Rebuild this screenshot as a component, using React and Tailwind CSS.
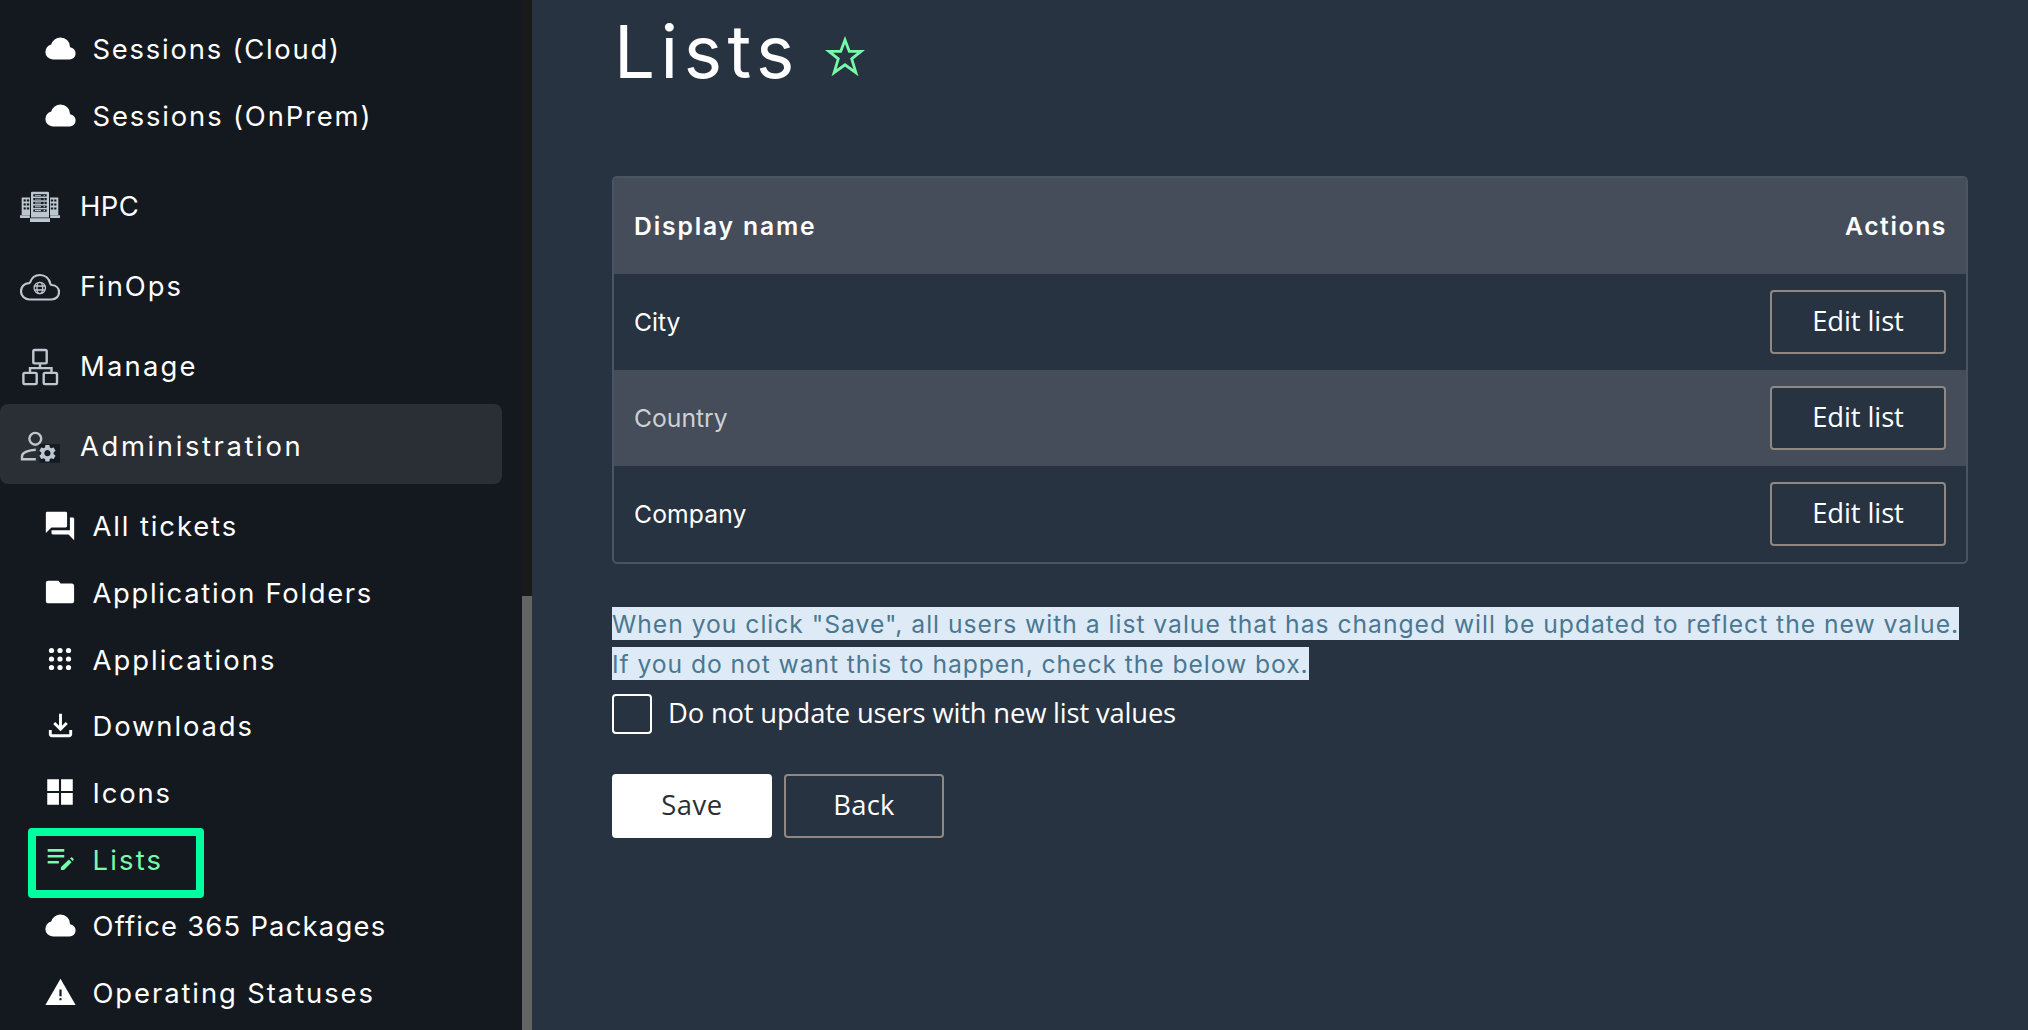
import React from "react";

const CloudIcon = () => (
  <svg viewBox="0 0 24 24" fill="currentColor" className="size-[33px]">
    <path d="M6.5 20q-2.28 0-3.89-1.57Q1 16.85 1 14.58q0-1.95 1.17-3.48q1.18-1.53 3.08-1.95q.63-2.3 2.5-3.72Q9.63 4 12 4q2.93 0 4.96 2.04Q19 8.07 19 11q1.73.2 2.86 1.5q1.14 1.28 1.14 3q0 1.88-1.31 3.19T18.5 20Z" />
  </svg>
);

const ForumIcon = () => (
  <svg viewBox="0 0 24 24" fill="currentColor" className="size-[34px]">
    <path d="M21 6h-2v9H6v2c0 .55.45 1 1 1h11l4 4V7c0-.55-.45-1-1-1zm-4 6V3c0-.55-.45-1-1-1H3c-.55 0-1 .45-1 1v14l4-4h10c.55 0 1-.45 1-1z" />
  </svg>
);

const FolderIcon = () => (
  <svg viewBox="0 0 24 24" fill="currentColor" className="size-[34px]">
    <path d="M3.6 20q-.65 0-1.1-.45T2.05 18.5v-13q0-.6.45-1.05T3.6 4h6.7q.4 0 .75.3L12.4 6h8q.65 0 1.1.45t.45 1.05v11q0 .6-.45 1.05t-1.1.45z" />
  </svg>
);

const AppsIcon = () => (
  <svg viewBox="0 0 24 24" fill="currentColor" className="size-[34px]">
    {[6, 12, 18].map((y) => [6, 12, 18].map((x) => <circle key={`${x}-${y}`} cx={x} cy={y} r="1.85" />))}
  </svg>
);

const DownloadIcon = () => (
  <svg viewBox="0 0 24 24" fill="currentColor" className="size-[35px]">
    <path d="M12 16l-5-5 1.4-1.45 2.6 2.6V4h2v8.15l2.6-2.6L17 11zM6 20q-.825 0-1.413-.588T4 18v-3h2v3h12v-3h2v3q0 .825-.587 1.413T18 20z" />
  </svg>
);

const WindowIcon = () => (
  <svg viewBox="0 0 24 24" fill="currentColor" className="size-[34px]">
    <path d="M3 3h8.25v8.25H3zM12.75 3H21v8.25h-8.25zM3 12.75h8.25V21H3zM12.75 12.75H21V21h-8.25z" />
  </svg>
);

const EditNoteIcon = () => (
  <svg viewBox="0 0 24 24" fill="currentColor" className="size-[34px]">
    <path d="M3.3 5H15v1.8H3.3zM3.3 9.2H15V11H3.3zM3.3 13.4h7.9v1.8H3.3z" />
    <path d="M18.3 12.4l1.9 1.9-5.2 5.2q-.35.35-.8.35h-1.1q-.5 0-.5-.5v-1.1q0-.4.3-.7zM19.1 11.6l.6-.6q.45-.45.9 0l.9.9q.45.45 0 .9l-.6.6z" />
  </svg>
);

const WarningIcon = () => (
  <svg viewBox="0 0 24 24" fill="currentColor" className="size-[33px]">
    <path
      fillRule="evenodd"
      d="M1 21 12 2l11 19zM11.2 9.8v4.9h1.6V9.8zM12 16q-.85 0-.85.85t.85.85.85-.85T12 16z"
    />
  </svg>
);

const ServersIcon = () => (
  <svg viewBox="0 0 40 40" className="size-10" fill="#bdc7cf">
    <path d="M1.7 13.5h8.3V31H1.7zM30 13.5h8.3V31H30zM0 31.2h9.8V34H0zM30.2 31.2H40V34h-9.8z" />
    <path d="M11 9q0-1.2 1.2-1.2h15.6Q29 7.8 29 9v24.6H11zM10 34.2h20V38H10z" />
    <g fill="#141b22">
      {[10.2, 14, 17.8, 21.6, 25.4].map((y) => (
        <path key={y} d={`M13.3 ${y}h13.4v2.3H13.3z`} />
      ))}
      {[15.4, 19.4, 23.4].map((y) => (
        <g key={y}>
          <path d={`M3.6 ${y}h5.6v2.1H3.6z`} />
          <path d={`M30.8 ${y}h5.6v2.1h-5.6z`} />
        </g>
      ))}
    </g>
    <g fill="#bdc7cf">
      {[10.9, 14.7, 18.5, 22.3, 26.1].map((y) => (
        <path key={y} d={`M15 ${y}h6v.9h-6zM23.5 ${y}h1.5v.9h-1.5z`} />
      ))}
      <path d="M5.8 15h1v11h-1zM33.2 15h1v11h-1z" />
    </g>
  </svg>
);

const FinOpsIcon = () => (
  <svg viewBox="0 0 40 40" className="size-10" fill="none" stroke="#bdc7cf">
    <path
      strokeWidth="2.2"
      strokeLinejoin="round"
      d="M9.5 35.5C4.6 35.5 1 31.7 1 27.3c0-4.6 3.4-8 8-8.2.6-.1 1-.4 1.2-.9C11.7 13.9 15.2 11 19.9 11c5.1 0 9.2 3.3 10.4 8.7.2.9.6 1.2 1.5 1.3 4.2.3 7.2 3.3 7.2 7.2 0 4.1-3.2 7.3-7.5 7.3z"
    />
    <g strokeWidth="1.3">
      <circle cx="19.8" cy="24" r="5.7" />
      <ellipse cx="19.8" cy="24" rx="2.9" ry="5.7" />
      <path d="M14.7 22h10.2M14.7 26h10.2" />
    </g>
  </svg>
);

const ManageIcon = () => (
  <svg viewBox="0 0 40 40" className="size-10 overflow-visible" fill="none" stroke="#bdc7cf" strokeWidth="2.4">
    <rect x="13.3" y="6" width="13.4" height="13.4" rx="1.3" />
    <rect x="3.4" y="28.9" width="13.3" height="11.2" rx="1.3" />
    <rect x="23.7" y="28.9" width="13.3" height="11.2" rx="1.3" />
    <path d="M20 19.4v4.7M10 28.9v-4.8h21.5v4.8" />
  </svg>
);

const AdminIcon = () => (
  <svg viewBox="0 0 40 40" className="size-10" fill="none" stroke="#bdc7cf" strokeWidth="2.4">
    <circle cx="15.3" cy="14.8" r="5.9" />
    <path d="M15.8 25.7C9 26 2 28.4 2 32.4V35.2h13.8" />
    <rect x="19.5" y="20" width="20.5" height="18.7" fill="#141b24" stroke="none" />
    <g transform="translate(17.1 18.9) scale(.86)">
      <path
        fill="#bdc7cf"
        stroke="none"
        d="M19.14 12.94c.04-.3.06-.61.06-.94 0-.32-.02-.64-.07-.94l2.03-1.58c.18-.14.23-.41.12-.61l-1.92-3.32c-.12-.22-.37-.29-.59-.22l-2.39.96c-.5-.38-1.03-.7-1.62-.94l-.36-2.54c-.04-.24-.24-.41-.48-.41h-3.84c-.24 0-.43.17-.47.41l-.36 2.54c-.59.24-1.13.57-1.62.94l-2.39-.96c-.22-.08-.47 0-.59.22L2.74 8.87c-.12.21-.08.47.12.61l2.03 1.58c-.05.3-.09.63-.09.94s.02.64.07.94l-2.03 1.58c-.18.14-.23.41-.12.61l1.92 3.32c.12.22.37.29.59.22l2.39-.96c.5.38 1.03.7 1.62.94l.36 2.54c.05.24.24.41.48.41h3.84c.24 0 .44-.17.47-.41l.36-2.54c.59-.24 1.13-.56 1.62-.94l2.39.96c.22.08.47 0 .59-.22l1.92-3.32c.12-.22.07-.47-.12-.61l-2.01-1.58zM12 15.6c-1.98 0-3.6-1.62-3.6-3.6s1.62-3.6 3.6-3.6 3.6 1.62 3.6 3.6-1.62 3.6-3.6 3.6z"
      />
    </g>
  </svg>
);

function SubItem({ icon: Icon, label, tracking, active }) {
  return (
    <li className={`flex h-[66.67px] items-center ${active ? "relative text-[#78faab]" : "text-white"}`}>
      <span className="ml-10 flex w-10 shrink-0 justify-center pb-px">
        <Icon />
      </span>
      <span className={`ml-[12.5px] whitespace-nowrap text-[27.4px] leading-9 ${tracking}`}>{label}</span>
      {active && (
        <span className="absolute top-[2px] left-7 h-[70px] w-44 rounded-[4px] border-8 border-[#00ff9f]" />
      )}
    </li>
  );
}

function MainItem({ icon: Icon, label, tracking, active }) {
  return (
    <li className={`flex h-20 w-[502px] items-center rounded-lg text-white ${active ? "bg-[#2a2e35]" : ""}`}>
      <span className="ml-5 shrink-0">
        <Icon />
      </span>
      <span className={`ml-5 pt-[5px] whitespace-nowrap text-[27.4px] leading-9 ${tracking}`}>{label}</span>
    </li>
  );
}

function OutlineButton({ children, className }) {
  return (
    <button
      className={`flex h-16 items-center justify-center rounded-[4px] border-2 border-[#8f8883] bg-[#283341] pb-[3px] font-['Open_Sans',sans-serif] text-[27.4px] text-white ${className}`}
    >
      {children}
    </button>
  );
}

function Row({ label, tracking, hovered }) {
  return (
    <div className={`flex h-24 items-center justify-between pr-5 pl-5 ${hovered ? "bg-[#444d59] text-[#cdd1d6]" : "text-white"}`}>
      <span className={`pt-[2px] text-[24.7px] ${tracking}`}>{label}</span>
      <OutlineButton className="w-44 tracking-[-0.1px]">Edit list</OutlineButton>
    </div>
  );
}

export default function App() {
  return (
    <div className="flex h-[1030px] w-[2028px] overflow-hidden bg-[#283341] font-['Inter',sans-serif]">
      <aside className="flex w-[532px] shrink-0 bg-[#141920]">
        <nav className="w-[522px] pt-4">
          <ul>
            <SubItem icon={CloudIcon} label="Sessions (Cloud)" tracking="tracking-[1.78px]" />
            <SubItem icon={CloudIcon} label="Sessions (OnPrem)" tracking="tracking-[1.85px]" />
          </ul>
          <ul className="mt-[14.66px]">
            <MainItem icon={ServersIcon} label="HPC" tracking="tracking-[0.4px]" />
            <MainItem icon={FinOpsIcon} label="FinOps" tracking="tracking-[1.95px]" />
            <MainItem icon={ManageIcon} label="Manage" tracking="tracking-[2.2px]" />
            <MainItem icon={AdminIcon} label="Administration" tracking="tracking-[2.63px]" active />
          </ul>
          <ul className="mt-[9px]">
            <SubItem icon={ForumIcon} label="All tickets" tracking="tracking-[1.9px]" />
            <SubItem icon={FolderIcon} label="Application Folders" tracking="tracking-[1.68px]" />
            <SubItem icon={AppsIcon} label="Applications" tracking="tracking-[2.02px]" />
            <SubItem icon={DownloadIcon} label="Downloads" tracking="tracking-[1.9px]" />
            <SubItem icon={WindowIcon} label="Icons" tracking="tracking-[1.85px]" />
            <SubItem icon={EditNoteIcon} label="Lists" tracking="tracking-[2.2px]" active />
            <SubItem icon={CloudIcon} label="Office 365 Packages" tracking="tracking-[1.23px]" />
            <SubItem icon={WarningIcon} label="Operating Statuses" tracking="tracking-[1.92px]" />
          </ul>
        </nav>
        <div className="w-[10px] bg-[#1a1a1a] pt-[596px]">
          <div className="h-[434px] bg-[#646464]" />
        </div>
      </aside>

      <main className="flex w-[1436px] shrink-0 flex-col pl-20">
        <header className="flex h-[176px] items-start pt-2">
          <h1 className="ml-[2px] w-[186px] text-[72.6px] leading-[88px] tracking-[5.5px] text-white">Lists</h1>
          <svg viewBox="0 0 44 44" className="mt-[25px] ml-[22.5px] size-11" fill="none" stroke="#78faab" strokeWidth="2.8" strokeMiterlimit="10">
            <path d="M22 7 26.3 18.4H38L28.7 25.8 32.9 39.6 22 31.8 11.1 39.6 15.3 25.8 6 18.4H17.7z" />
          </svg>
        </header>

        <section className="overflow-hidden rounded-[5px] border-2 border-[#4a5562]">
          <div className="flex h-24 items-center justify-between bg-[#444d59] px-5 text-[24.7px] font-semibold text-white">
            <span className="pt-px tracking-[1.85px]">Display name</span>
            <span className="-mr-px pt-px tracking-[1.6px]">Actions</span>
          </div>
          <Row label="City" tracking="tracking-[0px]" />
          <Row label="Country" tracking="tracking-[0px]" hovered />
          <Row label="Company" tracking="tracking-[0.1px]" />
        </section>

        <p className="mt-10 text-[24.7px] leading-10 whitespace-nowrap text-[#4a7891]">
          <span className="bg-[#deebf7] pt-[2px] pb-px tracking-[0.97px]">
            When you click "Save", all users with a list value that has changed will be updated to reflect the new value.
          </span>
          <br />
          <span className="bg-[#deebf7] pt-[2px] pb-px tracking-[0.92px]">
            If you do not want this to happen, check the below box.
          </span>
        </p>

        <label className="mt-[10px] flex h-10 items-center">
          <span className="size-10 rounded-[4px] border-2 border-white" />
          <span className="ml-4 pb-[3px] font-['Open_Sans',sans-serif] text-[27.4px] tracking-[-0.18px] text-white">
            Do not update users with new list values
          </span>
        </label>

        <div className="mt-10 flex gap-3">
          <button className="flex h-16 w-40 items-center justify-center rounded-[4px] bg-white pb-[3px] font-['Open_Sans',sans-serif] text-[27.4px] tracking-[0.5px] text-[#2b2f33]">
            Save
          </button>
          <OutlineButton className="w-40 tracking-[0.3px]">Back</OutlineButton>
        </div>
      </main>
    </div>
  );
}
